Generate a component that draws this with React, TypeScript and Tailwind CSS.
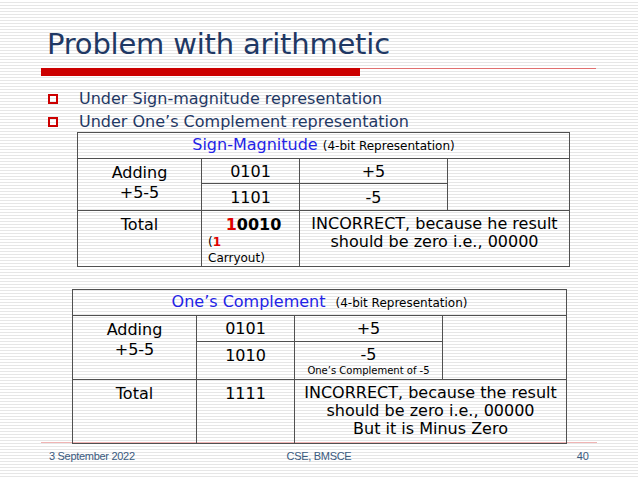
import React from "react";

const V = { fontFamily: '"DejaVu Sans", Verdana, sans-serif' };

export default function App() {
  return (
    <div
      className="relative w-[638px] h-[478px] overflow-hidden bg-[repeating-linear-gradient(to_bottom,#ffffff_0px,#ffffff_2px,#e6e6e6_2px,#e6e6e6_3px)] flex flex-col"
      style={V}
    >
      {/* Title */}
      <div className="pl-[47px] pt-[27px] h-[68px] text-[29px] leading-[34px] text-[#1f3864] tracking-[-0.2px]">
        Problem with arithmetic
      </div>
      {/* Red rule */}
      <div className="flex items-start pl-[41px] pr-[42px] h-[8px]">
        <div className="w-[319px] h-[8px] bg-[#cc0000]" />
        <div className="flex-1 h-px bg-[#e07070]" />
      </div>
      {/* Bullets */}
      <div className="pt-[11px] flex flex-col text-[16px] leading-[23px] text-[#1f3864]">
        <div className="flex items-center pl-[48px]">
          <span className="w-[10px] h-[10px] border-2 border-[#cc0000] mr-[21px]" />
          <span>Under Sign-magnitude representation</span>
        </div>
        <div className="flex items-center pl-[48px]">
          <span className="w-[10px] h-[10px] border-2 border-[#cc0000] mr-[21px]" />
          <span>Under One’s Complement representation</span>
        </div>
      </div>

      {/* Table 1 */}
      <div className="pl-[77px] mt-[-1px]">
        <table className="border-collapse text-black text-[16px] leading-[19px]">
          <colgroup>
            <col className="w-[124px]" />
            <col className="w-[98px]" />
            <col className="w-[148px]" />
            <col className="w-[122px]" />
          </colgroup>
          <tbody>
            <tr className="h-[26px]">
              <td colSpan={4} className="border-[1.5px] border-[#505050] text-center align-middle p-0">
                <span className="text-[#2323e6] text-[16px]">Sign-Magnitude</span>{" "}
                <span className="text-[12px]">(4-bit Representation)</span>
              </td>
            </tr>
            <tr className="h-[25px]">
              <td rowSpan={2} className="border-[1.5px] border-[#505050] text-center align-top pt-[4px] leading-[20px]">
                Adding
                <br />
                +5-5
              </td>
              <td className="border-[1.5px] border-[#505050] text-center align-middle p-0">0101</td>
              <td className="border-[1.5px] border-[#505050] text-center align-middle p-0">+5</td>
              <td rowSpan={2} className="border-[1.5px] border-[#505050]" />
            </tr>
            <tr className="h-[27px]">
              <td className="border-[1.5px] border-[#505050] text-center align-middle p-0">1101</td>
              <td className="border-[1.5px] border-[#505050] text-center align-middle p-0">-5</td>
            </tr>
            <tr className="h-[53px]">
              <td className="border-[1.5px] border-[#505050] text-center align-top pt-[4px]">Total</td>
              <td className="border-[1.5px] border-[#505050] align-top pt-[4px] pl-[6px]">
                <div className="text-center font-bold">
                  <span className="text-[#e00000]">1</span>0010
                </div>
                <div className="text-[12px] leading-[16px]">
                  (<span className="text-[#e00000] font-bold">1</span>
                  <br />
                  Carryout)
                </div>
              </td>
              <td colSpan={2} className="border-[1.5px] border-[#505050] text-center align-top pt-[4px] leading-[18px]">
                INCORRECT, because he result
                <br />
                should be zero i.e., 00000
              </td>
            </tr>
          </tbody>
        </table>
      </div>

      {/* Table 2 */}
      <div className="pl-[72px] mt-[22px] relative z-10">
        <table className="border-collapse text-black text-[16px] leading-[19px]">
          <colgroup>
            <col className="w-[124px]" />
            <col className="w-[98px]" />
            <col className="w-[148px]" />
            <col className="w-[124px]" />
          </colgroup>
          <tbody>
            <tr className="h-[26px]">
              <td colSpan={4} className="border-[1.5px] border-[#505050] text-center align-middle p-0">
                <span className="text-[#2323e6] text-[16px]">One’s Complement</span>
                <span className="ml-[10px] text-[12px]">(4-bit Representation)</span>
              </td>
            </tr>
            <tr className="h-[26px]">
              <td rowSpan={2} className="border-[1.5px] border-[#505050] text-center align-top pt-[4px] leading-[20px]">
                Adding
                <br />
                +5-5
              </td>
              <td className="border-[1.5px] border-[#505050] text-center align-middle p-0">0101</td>
              <td className="border-[1.5px] border-[#505050] text-center align-middle p-0">+5</td>
              <td rowSpan={2} className="border-[1.5px] border-[#505050]" />
            </tr>
            <tr className="h-[38px]">
              <td className="border-[1.5px] border-[#505050] text-center align-top pt-[4px] p-0">1010</td>
              <td className="border-[1.5px] border-[#505050] text-center align-top pt-[3px] p-0">
                <div>-5</div>
                <div className="text-[10px] leading-[13px]">One’s Complement of -5</div>
              </td>
            </tr>
            <tr className="h-[64px]">
              <td className="border-[1.5px] border-[#505050] text-center align-top pt-[4px]">Total</td>
              <td className="border-[1.5px] border-[#505050] text-center align-top pt-[4px]">1111</td>
              <td colSpan={2} className="border-[1.5px] border-[#505050] text-center align-top pt-[4px] leading-[18px]">
                INCORRECT, because the result
                <br />
                should be zero i.e., 00000
                <br />
                But it is Minus Zero
              </td>
            </tr>
          </tbody>
        </table>
      </div>

      {/* Footer */}
      <div
        className="mx-[41px] mt-[-2px] border-t border-[#f0b4b4] flex items-center justify-between pt-[7px] px-[8px] text-[11px] leading-[13px] text-[#3a5a80]"
        style={{ fontFamily: '"Liberation Sans", Arial, sans-serif' }}
      >
        <span className="w-[120px] tracking-[-0.3px]">3 September 2022</span>
        <span className="tracking-[-0.3px]">CSE, BMSCE</span>
        <span className="w-[120px] text-right">40</span>
      </div>
    </div>
  );
}
